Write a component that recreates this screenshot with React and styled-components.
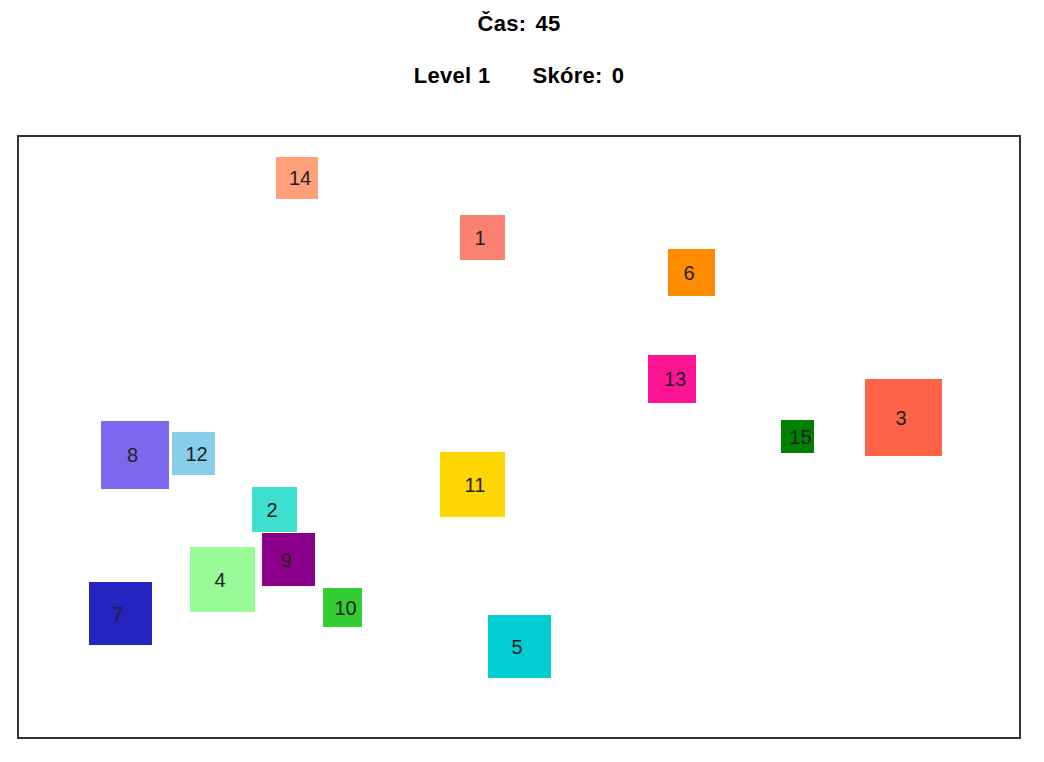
import React from 'react'
import styled, { createGlobalStyle } from 'styled-components'

const squares = [
  { n: 1, x: 441, y: 78, size: 45, color: '#fa8072' },
  { n: 2, x: 233, y: 350, size: 45, color: '#40e0d0' },
  { n: 3, x: 846, y: 242, size: 77, color: '#ff6347' },
  { n: 4, x: 171, y: 410, size: 65, color: '#98fb98' },
  { n: 5, x: 469, y: 478, size: 63, color: '#00ced1' },
  { n: 6, x: 649, y: 112, size: 47, color: '#ff8c00' },
  { n: 7, x: 70, y: 445, size: 63, color: '#2424c0' },
  { n: 8, x: 82, y: 284, size: 68, color: '#7b68ee' },
  { n: 9, x: 243, y: 396, size: 53, color: '#8b008b' },
  { n: 10, x: 304, y: 451, size: 39, color: '#32cd32' },
  { n: 11, x: 421, y: 315, size: 65, color: '#ffd700' },
  { n: 12, x: 153, y: 295, size: 43, color: '#87ceeb' },
  { n: 13, x: 629, y: 218, size: 48, color: '#ff1493' },
  { n: 14, x: 257, y: 20, size: 42, color: '#ffa07a' },
  { n: 15, x: 762, y: 283, size: 33, color: '#008000' },
]

const App = () => {
  return (
    <>
      <GlobalStyle />
      <Page>
        <Timer>Čas:<Value>45</Value></Timer>
        <Stats>
          <span>Level 1</span>
          <span>Skóre:<Value>0</Value></span>
        </Stats>
        <Board>
          {squares.map(sq => (
            <Square
              key={sq.n}
              $color={sq.color}
              $size={sq.size}
              style={{ left: sq.x, top: sq.y }}
            >
              {sq.n}
            </Square>
          ))}
        </Board>
      </Page>
    </>
  )
}

export default App

const GlobalStyle = createGlobalStyle`
   body {
      margin: 0;
      background: #fff;
      font-family: "Liberation Sans", Arial, sans-serif;
   }
`;

const Page = styled.div`
   width: 1038px;
   display: flex;
   flex-direction: column;
   align-items: center;
   padding-top: 11px;
`;

const Heading = styled.div`
   font-size: 22px;
   font-weight: 700;
   line-height: 25px;
   letter-spacing: 0.3px;
   color: #000;
`;

const Timer = styled(Heading)``;

const Stats = styled(Heading)`
   display: flex;
   gap: 42px;
   margin-top: 27px;
`;

const Value = styled.span`
   margin-left: 9px;
`;

const Board = styled.div`
   position: relative;
   box-sizing: border-box;
   width: 1004px;
   height: 604px;
   margin-top: 47px;
   border: 2px solid #333;
   background: #fff;
`;

const Square = styled.div`
   position: absolute;
   box-sizing: border-box;
   width: ${p => p.$size}px;
   height: ${p => p.$size}px;
   display: flex;
   align-items: center;
   padding-left: ${p => p.$size / 2 - 8}px;
   background: ${p => p.$color};
   color: #222;
   font-size: 20px;
   line-height: 1;
`;
